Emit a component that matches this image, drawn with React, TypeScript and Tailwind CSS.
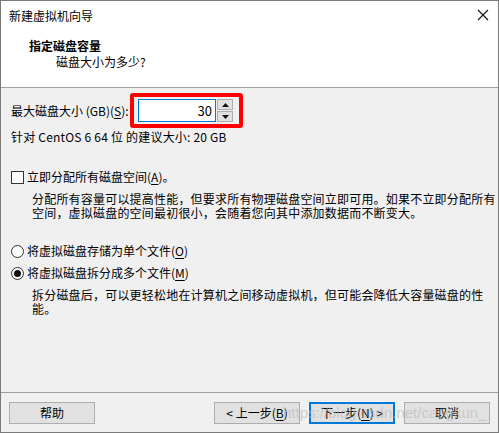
import React from 'react'

const font = { fontFamily: '"Noto Sans CJK SC", "Microsoft YaHei", sans-serif' }

function Key({ k }: { k: string }) {
  return (
    <>
      (<span className="underline underline-offset-2">{k}</span>)
    </>
  )
}

function Button({ children, primary }: { children: React.ReactNode; primary?: boolean }) {
  return (
    <div
      className={
        'w-[86px] h-[22px] flex items-center justify-center bg-[#e1e1e1] text-[12px] leading-none text-black ' +
        (primary ? 'border-2 border-[#0078d7]' : 'border border-[#adadad]')
      }
    >
      {children}
    </div>
  )
}

export default function App() {
  return (
    <div
      style={font}
      className="relative w-[499px] h-[433px] border border-[#7a7a7a] bg-[#f0f0f0] flex flex-col text-[12px] text-black overflow-hidden"
    >
      {/* Header */}
      <div className="h-[87px] shrink-0 bg-white border-b border-[#a0a0a0] flex flex-col">
        <div className="h-[29px] flex items-center justify-between pl-[8px] pr-[9px]">
          <span className="leading-[16px]">新建虚拟机向导</span>
          <svg width="12" height="12" viewBox="0 0 12 12" className="mt-[-1px]">
            <path d="M1 1 L11 11 M11 1 L1 11" stroke="#111" strokeWidth="1.1" />
          </svg>
        </div>
        <div className="mt-[8px] pl-[28px] font-bold leading-[16px]">指定磁盘容量</div>
        <div className="pl-[55px] leading-[16px]">磁盘大小为多少?</div>
      </div>

      {/* Body */}
      <div className="flex-1 flex flex-col pl-[10px]">
        <div className="mt-[5px] flex items-center h-[35px]">
          <span className="w-[119px] shrink-0 leading-[16px] whitespace-nowrap">
            最大磁盘大小 (GB)<Key k="S" />:
          </span>
          <div className="w-[113px] h-[35px] border-4 border-[#ff0000] rounded-[3px] flex items-center pl-[4px]">
            <div className="w-[78px] h-[23px] bg-white border border-[#0078d7] flex items-center justify-end pr-[3px] text-[13px]">
              30
            </div>
            <div className="ml-[1px] w-[16px] h-[23px] flex flex-col gap-[1px]">
              <div className="flex-1 bg-[#e1e1e1] border border-[#adadad] flex items-center justify-center">
                <svg width="7" height="4" viewBox="0 0 7 4">
                  <path d="M0 4 L3.5 0 L7 4 Z" fill="#111" />
                </svg>
              </div>
              <div className="flex-1 bg-[#e1e1e1] border border-[#adadad] flex items-center justify-center">
                <svg width="7" height="4" viewBox="0 0 7 4">
                  <path d="M0 0 L3.5 4 L7 0 Z" fill="#111" />
                </svg>
              </div>
            </div>
          </div>
        </div>
        <div className="mt-[1px] leading-[16px] tracking-[0.2px]">针对 CentOS 6 64 位 的建议大小: 20 GB</div>

        <div className="mt-[24px] flex items-center leading-[16px]">
          <span className="w-[13px] h-[13px] border border-[#333] bg-white mr-[3px]" />
          <span>
            立即分配所有磁盘空间<Key k="A" />。
          </span>
        </div>
        <div className="mt-[7px] pl-[21px] leading-[14px] whitespace-nowrap tracking-[0.2px]">
          分配所有容量可以提高性能，但要求所有物理磁盘空间立即可用。如果不立即分配所有
          <br />
          空间，虚拟磁盘的空间最初很小，会随着您向其中添加数据而不断变大。
        </div>

        <div className="mt-[23px] flex items-center leading-[16px]">
          <span className="w-[13px] h-[13px] rounded-full border border-[#333] bg-white mr-[3px]" />
          <span>
            将虚拟磁盘存储为单个文件<Key k="O" />
          </span>
        </div>
        <div className="mt-[6px] flex items-center leading-[16px]">
          <span className="w-[13px] h-[13px] rounded-full border border-[#333] bg-white mr-[3px] flex items-center justify-center">
            <span className="w-[7px] h-[7px] rounded-full bg-[#111]" />
          </span>
          <span>
            将虚拟磁盘拆分成多个文件<Key k="M" />
          </span>
        </div>
        <div className="mt-[7px] pl-[21px] leading-[14px] whitespace-nowrap tracking-[0.2px]">
          拆分磁盘后，可以更轻松地在计算机之间移动虚拟机，但可能会降低大容量磁盘的性
          <br />
          能。
        </div>
      </div>

      {/* Footer */}
      <div className="h-[40px] shrink-0 border-t border-[#a0a0a0] flex items-start pt-[9px] pl-[8px] pr-[8px]">
        <Button>帮助</Button>
        <div className="ml-auto flex gap-[9px]">
          <Button>
            &lt; 上一步<Key k="B" />
          </Button>
          <Button primary>
            下一步<Key k="N" /> &gt;
          </Button>
          <Button>取消</Button>
        </div>
      </div>

      <span
        className="absolute left-[282px] top-[402px] text-[15px] leading-[20px] text-[#b8b8b8]/60 pointer-events-none whitespace-nowrap"
        style={{ fontFamily: '"Liberation Sans", Arial, sans-serif' }}
      >
        https://blog.csdn.net/cangkun_
      </span>
    </div>
  )
}
